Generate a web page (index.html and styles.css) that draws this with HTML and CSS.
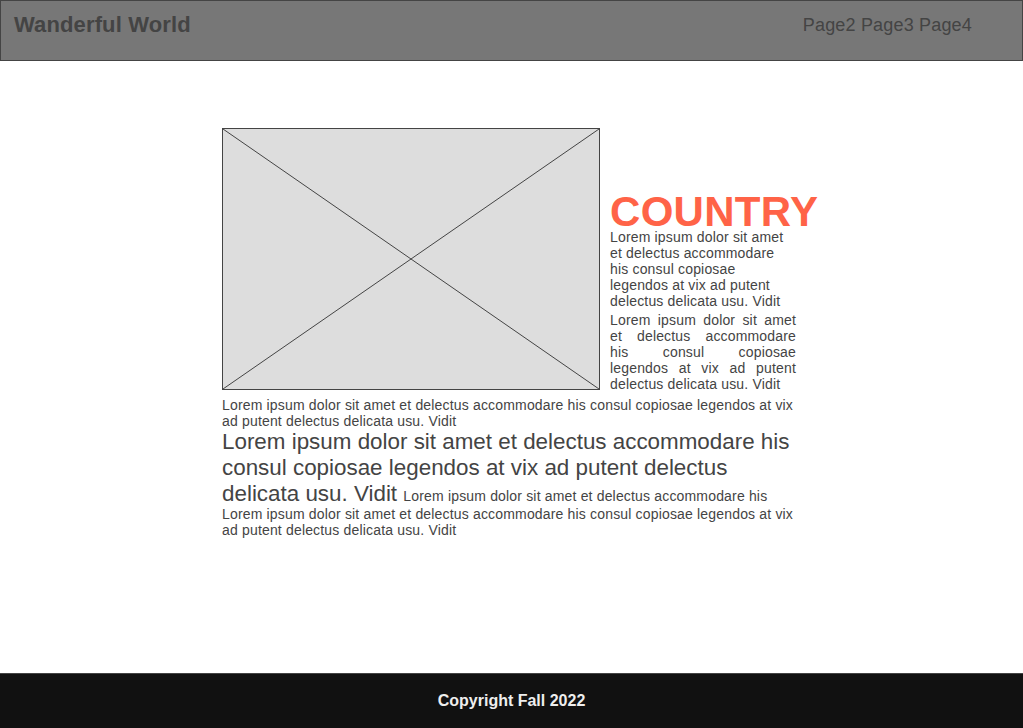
FILE: index.html
```html
<!DOCTYPE html>
<html lang="en">
<head>
<meta charset="utf-8">
<title>Wanderful World</title>
<link rel="stylesheet" href="styles.css">
</head>
<body>
<header class="site-header">
  <div class="brand">Wanderful World</div>
  <nav class="nav">Page2 Page3 Page4</nav>
</header>
<main class="main">
  <div class="content">
    <div class="feature">
      <div class="placeholder">
        <svg class="ph-svg" viewBox="0 0 376 260" preserveAspectRatio="none">
          <line x1="0" y1="0" x2="376" y2="260" stroke="#444" stroke-width="1"/>
          <line x1="376" y1="0" x2="0" y2="260" stroke="#444" stroke-width="1"/>
        </svg>
      </div>
      <div class="side">
        <h1 class="country">COUNTRY</h1>
        <p class="side-p">Lorem ipsum dolor sit amet et delectus accommodare his consul copiosae legendos at vix ad putent delectus delicata usu. Vidit</p>
        <p class="side-p justify">Lorem ipsum dolor sit amet et delectus accommodare his consul copiosae legendos at vix ad putent delectus delicata usu. Vidit</p>
      </div>
    </div>
    <p class="small">Lorem ipsum dolor sit amet et delectus accommodare his consul copiosae legendos at vix ad putent delectus delicata usu. Vidit</p>
    <div class="big">Lorem ipsum dolor sit amet et delectus accommodare his consul copiosae legendos at vix ad putent delectus delicata usu. Vidit <span class="inline-small">Lorem ipsum dolor sit amet et delectus accommodare his</span></div>
    <p class="small tail">Lorem ipsum dolor sit amet et delectus accommodare his consul copiosae legendos at vix ad putent delectus delicata usu. Vidit</p>
  </div>
</main>
<footer class="site-footer">Copyright Fall 2022</footer>
</body>
</html>
```
FILE: styles.css
```css
html, body {
  margin: 0;
  padding: 0;
}
body {
  min-height: 100vh;
  display: flex;
  flex-direction: column;
  background: #fff;
  font-family: "Liberation Sans", Arial, sans-serif;
  color: #444;
}
.site-header {
  height: 59px;
  border: 1px solid #444;
  background: #777;
  display: flex;
  justify-content: space-between;
  align-items: flex-start;
  padding: 0 50px 0 13px;
}
.brand {
  font-weight: bold;
  font-size: 22px;
  letter-spacing: 0.13px;
  line-height: 25px;
  margin-top: 11px;
  color: #444;
}
.nav {
  font-size: 18px;
  letter-spacing: 0.18px;
  line-height: 21px;
  margin-top: 14px;
  color: #444;
}
.main {
  flex: 1;
}
.content {
  width: 580px;
  margin: 67px auto 0;
  padding-left: 1px;
}
.feature {
  display: flex;
  align-items: flex-end;
}
.placeholder {
  width: 376px;
  height: 260px;
  border: 1px solid #444;
  background: #ddd;
  flex: none;
}
.ph-svg {
  display: block;
  width: 100%;
  height: 100%;
}
.side {
  width: 186px;
  margin-left: 10px;
  margin-bottom: -2px;
}
.country {
  margin: 0;
  font-weight: bold;
  font-size: 42px;
  letter-spacing: 0.3px;
  line-height: 34px;
  color: #ff6347;
  white-space: nowrap;
}
.side-p {
  margin: 0 0 3px;
  font-size: 14px;
  letter-spacing: 0.17px;
  line-height: 16px;
}
.side-p:last-child {
  margin-bottom: 0;
}
.justify {
  text-align: justify;
}
.small {
  margin: 7px 0 0;
  font-size: 14px;
  letter-spacing: 0.17px;
  line-height: 16px;
}
.big {
  font-size: 22.4px;
  line-height: 26px;
}
.inline-small {
  font-size: 14px;
  letter-spacing: 0.17px;
}
.tail {
  margin-top: -3px;
}
.site-footer {
  height: 54px;
  border-top: 1px solid #444;
  background: #111;
  color: #eee;
  font-weight: bold;
  font-size: 16px;
  display: flex;
  align-items: center;
  justify-content: center;
}
```
